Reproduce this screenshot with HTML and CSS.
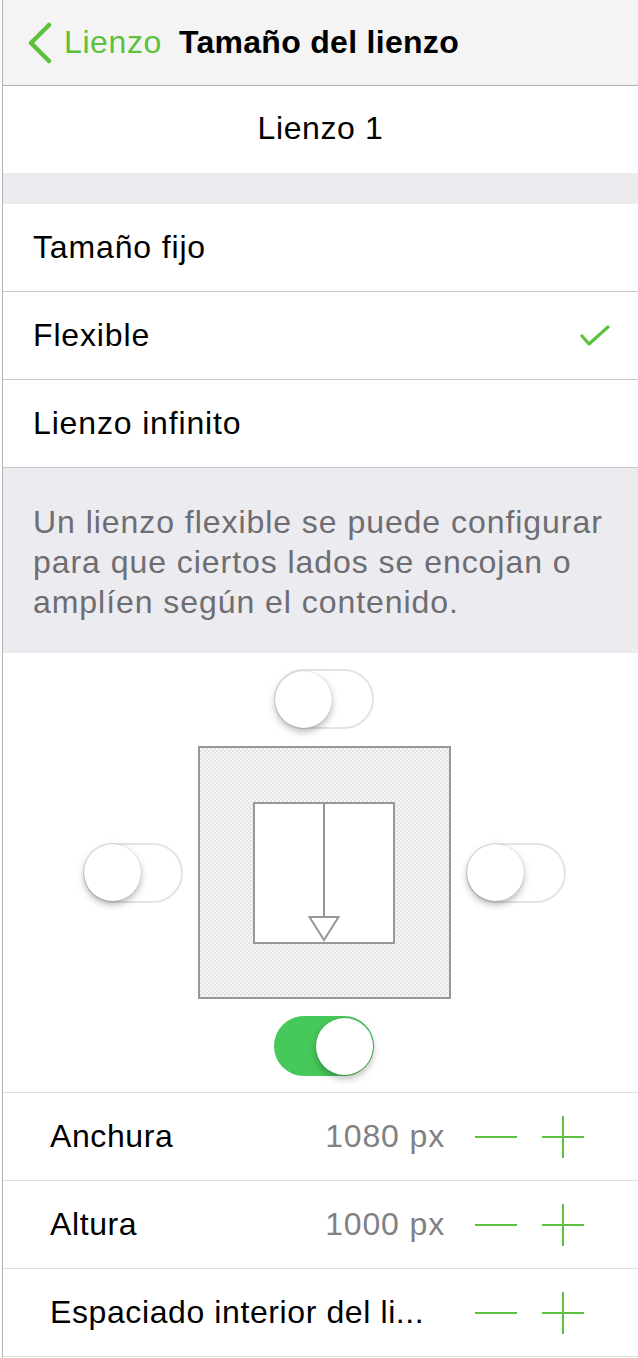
FILE: index.html
```html
<!DOCTYPE html>
<html lang="es">
<head>
<meta charset="utf-8">
<title>Tamaño del lienzo</title>
<link rel="stylesheet" href="styles.css">
</head>
<body>
<div class="screen">
  <header class="navbar">
    <a class="back" href="#">
      <svg class="chevron" width="26" height="42" viewBox="0 0 26 42" aria-hidden="true">
        <polyline points="22,3 4,21 22,39" fill="none" stroke="#5cc13c" stroke-width="4.5" stroke-linecap="round" stroke-linejoin="round"/>
      </svg>
      <span>Lienzo</span>
    </a>
    <h1 class="title">Tamaño del lienzo</h1>
  </header>

  <div class="name-row">Lienzo 1</div>
  <div class="gap-band"></div>

  <ul class="options">
    <li class="option">Tamaño fijo</li>
    <li class="option">Flexible
      <svg class="check" width="30" height="22" viewBox="0 0 30 22" aria-hidden="true">
        <polyline points="2,11 9,19 28,2" fill="none" stroke="#5cc13c" stroke-width="3.2" stroke-linecap="round" stroke-linejoin="round"/>
      </svg>
    </li>
    <li class="option">Lienzo infinito</li>
  </ul>

  <p class="note">Un lienzo flexible se puede configurar para que ciertos lados se encojan o amplíen según el contenido.</p>

  <section class="edges">
    <span class="switch edge-top"><span class="knob"></span></span>
    <span class="switch edge-left"><span class="knob"></span></span>
    <div class="canvas-box">
      <svg width="142" height="142" viewBox="0 0 142 142" aria-hidden="true">
        <rect x="1" y="1" width="140" height="140" fill="#fff" stroke="#979797" stroke-width="2"/>
        <line x1="71" y1="1" x2="71" y2="115" stroke="#979797" stroke-width="2"/>
        <polygon points="56.5,115 85.5,115 71,138" fill="#fff" stroke="#979797" stroke-width="2" stroke-linejoin="miter"/>
      </svg>
    </div>
    <span class="switch edge-right"><span class="knob"></span></span>
    <span class="switch edge-bottom on"><span class="knob"></span></span>
  </section>

  <ul class="dims">
    <li class="dim">
      <span class="dim-label">Anchura</span>
      <span class="dim-value">1080 px</span>
      <span class="stepper">
        <svg width="42" height="42" viewBox="0 0 42 42" aria-hidden="true"><line x1="0" y1="21" x2="42" y2="21" stroke="#5dc13e" stroke-width="2"/></svg>
        <svg width="42" height="42" viewBox="0 0 42 42" aria-hidden="true"><line x1="0" y1="21" x2="42" y2="21" stroke="#5dc13e" stroke-width="2"/><line x1="21" y1="0" x2="21" y2="42" stroke="#5dc13e" stroke-width="2"/></svg>
      </span>
    </li>
    <li class="dim">
      <span class="dim-label">Altura</span>
      <span class="dim-value">1000 px</span>
      <span class="stepper">
        <svg width="42" height="42" viewBox="0 0 42 42" aria-hidden="true"><line x1="0" y1="21" x2="42" y2="21" stroke="#5dc13e" stroke-width="2"/></svg>
        <svg width="42" height="42" viewBox="0 0 42 42" aria-hidden="true"><line x1="0" y1="21" x2="42" y2="21" stroke="#5dc13e" stroke-width="2"/><line x1="21" y1="0" x2="21" y2="42" stroke="#5dc13e" stroke-width="2"/></svg>
      </span>
    </li>
    <li class="dim">
      <span class="dim-label">Espaciado interior del li...</span>
      <span class="stepper">
        <svg width="42" height="42" viewBox="0 0 42 42" aria-hidden="true"><line x1="0" y1="21" x2="42" y2="21" stroke="#5dc13e" stroke-width="2"/></svg>
        <svg width="42" height="42" viewBox="0 0 42 42" aria-hidden="true"><line x1="0" y1="21" x2="42" y2="21" stroke="#5dc13e" stroke-width="2"/><line x1="21" y1="0" x2="21" y2="42" stroke="#5dc13e" stroke-width="2"/></svg>
      </span>
    </li>
  </ul>
</div>
</body>
</html>
```

FILE: styles.css
```css
* {
  box-sizing: border-box;
}

html, body {
  margin: 0;
  padding: 0;
  background: #fff;
}

body {
  font-family: "Liberation Sans", Arial, sans-serif;
  font-size: 32px;
  letter-spacing: 0.85px;
  color: #000;
}

.screen {
  margin-left: 2px;
  border-left: 1px solid #b5b5b5;
  min-height: 1358px;
  background: #fff;
}

/* navigation bar */
.navbar {
  height: 86px;
  border-bottom: 1px solid #b2b2b2;
  background: #f4f4f4;
  display: flex;
  align-items: center;
  padding-left: 24px;
  gap: 17px;
}

.back {
  display: flex;
  align-items: center;
  gap: 11px;
  color: #5cc13c;
  text-decoration: none;
  letter-spacing: 0.6px;
}

.chevron {
  display: block;
}

.title {
  margin: 0;
  font-size: 32px;
  font-weight: bold;
  letter-spacing: 0.3px;
}

/* canvas name */
.name-row {
  height: 87px;
  display: flex;
  align-items: center;
  justify-content: center;
  padding-bottom: 2px;
  letter-spacing: 0.6px;
}

.gap-band {
  height: 31px;
  background: #ebebf0;
}

/* size mode options */
.options,
.dims {
  list-style: none;
  margin: 0;
  padding: 0;
}

.option {
  height: 88px;
  border-bottom: 1px solid #c8c7cc;
  display: flex;
  align-items: center;
  justify-content: space-between;
  padding: 0 28px 0 30px;
}

.check {
  display: block;
}

.note {
  margin: 0;
  height: 185px;
  background: #ebebf0;
  color: #6d6d72;
  line-height: 40px;
  padding: 34px 14px 0 30px;
  letter-spacing: 0.95px;
}

/* edge switches around the canvas preview */
.edges {
  display: grid;
  grid-template-columns: 100px 253px 100px;
  grid-template-rows: 60px 253px 61px;
  column-gap: 15px;
  row-gap: 17px;
  justify-content: center;
  padding: 16px 0 15px 7px;
  border-bottom: 1px solid #dedede;
}

.edge-top { grid-column: 2; grid-row: 1; justify-self: center; }
.edge-left { grid-column: 1; grid-row: 2; align-self: center; }
.edge-right { grid-column: 3; grid-row: 2; align-self: center; }
.edge-bottom { grid-column: 2; grid-row: 3; justify-self: center; }

.canvas-box {
  grid-column: 2;
  grid-row: 2;
  border: 2px solid #979797;
  background-color: #efefef;
  background-image: repeating-conic-gradient(#e4e4e4 0 25%, #f7f7f7 0 50%);
  background-size: 4px 4px;
  display: flex;
  align-items: center;
  justify-content: center;
}

.canvas-box svg {
  display: block;
}

.switch {
  width: 100px;
  height: 60px;
  border-radius: 30px;
  border: 2px solid #e4e4e4;
  background: #fff;
  display: flex;
  align-items: center;
  padding: 0;
}

.switch .knob {
  width: 57px;
  height: 57px;
  border-radius: 50%;
  background: #fff;
  margin-left: -1px;
  box-shadow: 0 4px 6px rgba(0, 0, 0, 0.22), 0 0 1px rgba(0, 0, 0, 0.3), 0 3px 14px rgba(0, 0, 0, 0.06);
}

.switch.on {
  background: #46c95a;
  border-color: #46c95a;
  justify-content: flex-end;
}

.switch.on .knob {
  margin-left: 0;
  margin-right: -1px;
}

/* dimension steppers */
.dim {
  height: 88px;
  border-bottom: 1px solid #dedede;
  display: flex;
  align-items: center;
  padding: 0 54px 0 47px;
}

.dim-label {
  flex: 1;
  white-space: nowrap;
  letter-spacing: 0.6px;
}

.dim-value {
  color: #808085;
  margin-right: 30px;
}

.stepper {
  display: flex;
  gap: 25px;
}

.stepper svg {
  display: block;
}
```
